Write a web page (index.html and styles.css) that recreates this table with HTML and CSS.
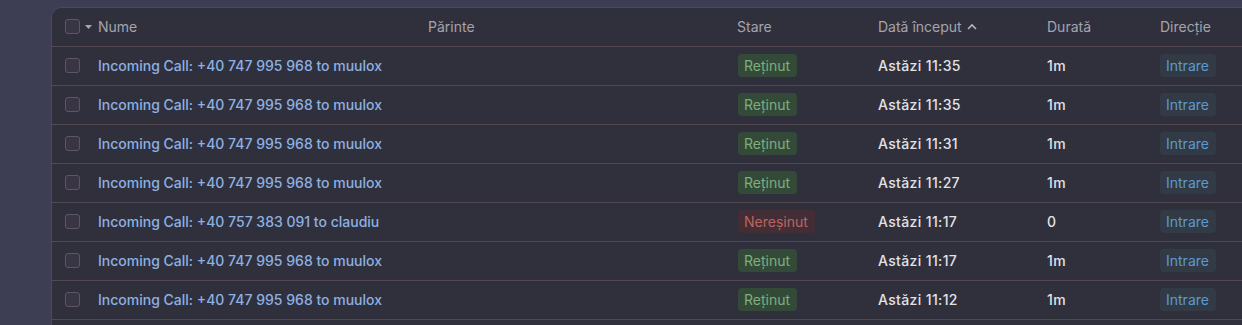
FILE: index.html
```html
<!DOCTYPE html>
<html lang="ro">
<head>
<meta charset="utf-8">
<link rel="stylesheet" href="styles.css">
</head>
<body>
<div class="page">
  <div class="card">
    <div class="row head">
      <div class="cell sel"><span class="box"></span><svg class="caret" width="7" height="4" viewBox="0 0 7 4"><path d="M0 0h7L3.5 4z" fill="#a6a6ae"/></svg></div>
      <div class="cell">Nume</div>
      <div class="cell">Părinte</div>
      <div class="cell">Stare</div>
      <div class="cell">Dată început <svg class="sort" width="10" height="7" viewBox="0 0 10 7"><path d="M1 6l4-4 4 4" fill="none" stroke="#b4b4bc" stroke-width="1.6"/></svg></div>
      <div class="cell">Durată</div>
      <div class="cell">Direcție</div>
    </div>
    <div class="row"><div class="cell sel"><span class="box"></span></div><div class="cell name">Incoming Call: +40 747 995 968 to muulox</div><div class="cell"></div><div class="cell"><span class="badge ok">Reținut</span></div><div class="cell val">Astăzi 11:35</div><div class="cell val">1m</div><div class="cell"><span class="badge dir">Intrare</span></div></div>
    <div class="row"><div class="cell sel"><span class="box"></span></div><div class="cell name">Incoming Call: +40 747 995 968 to muulox</div><div class="cell"></div><div class="cell"><span class="badge ok">Reținut</span></div><div class="cell val">Astăzi 11:35</div><div class="cell val">1m</div><div class="cell"><span class="badge dir">Intrare</span></div></div>
    <div class="row"><div class="cell sel"><span class="box"></span></div><div class="cell name">Incoming Call: +40 747 995 968 to muulox</div><div class="cell"></div><div class="cell"><span class="badge ok">Reținut</span></div><div class="cell val">Astăzi 11:31</div><div class="cell val">1m</div><div class="cell"><span class="badge dir">Intrare</span></div></div>
    <div class="row"><div class="cell sel"><span class="box"></span></div><div class="cell name">Incoming Call: +40 747 995 968 to muulox</div><div class="cell"></div><div class="cell"><span class="badge ok">Reținut</span></div><div class="cell val">Astăzi 11:27</div><div class="cell val">1m</div><div class="cell"><span class="badge dir">Intrare</span></div></div>
    <div class="row"><div class="cell sel"><span class="box"></span></div><div class="cell name">Incoming Call: +40 757 383 091 to claudiu</div><div class="cell"></div><div class="cell"><span class="badge miss">Nereșinut</span></div><div class="cell val">Astăzi 11:17</div><div class="cell val">0</div><div class="cell"><span class="badge dir">Intrare</span></div></div>
    <div class="row"><div class="cell sel"><span class="box"></span></div><div class="cell name">Incoming Call: +40 747 995 968 to muulox</div><div class="cell"></div><div class="cell"><span class="badge ok">Reținut</span></div><div class="cell val">Astăzi 11:17</div><div class="cell val">1m</div><div class="cell"><span class="badge dir">Intrare</span></div></div>
    <div class="row"><div class="cell sel"><span class="box"></span></div><div class="cell name">Incoming Call: +40 747 995 968 to muulox</div><div class="cell"></div><div class="cell"><span class="badge ok">Reținut</span></div><div class="cell val">Astăzi 11:12</div><div class="cell val">1m</div><div class="cell"><span class="badge dir">Intrare</span></div></div>
  </div>
</div>
</body>
</html>
```

FILE: styles.css
```css
html, body {
  margin: 0;
  padding: 0;
  background: #3d3d53;
  overflow: hidden;
  font-family: Inter, "Noto Sans", sans-serif;
}
.page {
  padding: 7px 0 0 51px;
  height: 325px;
  box-sizing: border-box;
  overflow: hidden;
}
.card {
  width: 1230px;
  background: #30303d;
  border-top: 1px solid #4a4a5e;
  border-left: 1px solid #4a4a5e;
  border-top-left-radius: 10px;
  height: 340px;
}
.row {
  display: grid;
  grid-template-columns: 46px 330px 309px 141px 169px 113px 1fr;
  height: 38px;
  align-items: center;
  border-bottom: 1px solid #51494f;
  font-size: 14px;
}
.row > .cell {
  margin-top: -2px;
}
.row.head {
  color: #a4a4ac;
}
.cell {
  white-space: nowrap;
  display: flex;
  align-items: center;
}
.sel {
  padding-left: 13px;
  gap: 5px;
}
.box {
  width: 13px;
  height: 13px;
  border: 1px solid #5e5566;
  border-radius: 3px;
  background: #3a3544;
}
.caret { margin-top: 1px; }
.sort { margin-left: 5px; }
.name {
  color: #8db1e3;
  font-weight: 500;
}
.val {
  color: #e2e2e6;
  font-weight: 500;
  letter-spacing: 0.35px;
}
.badge {
  display: inline-block;
  height: 23px;
  line-height: 23px;
  padding: 0 7px 0 6px;
  border-radius: 4px;
  font-size: 14px;
}
.badge.ok {
  background: #344a38;
  color: #7eae7e;
  margin-left: 1px;
}
.badge.miss {
  background: #422e34;
  color: #bd6463;
  margin-left: 1px;
}
.badge.dir {
  background: #323a45;
  color: #5b9ad0;
}
```
